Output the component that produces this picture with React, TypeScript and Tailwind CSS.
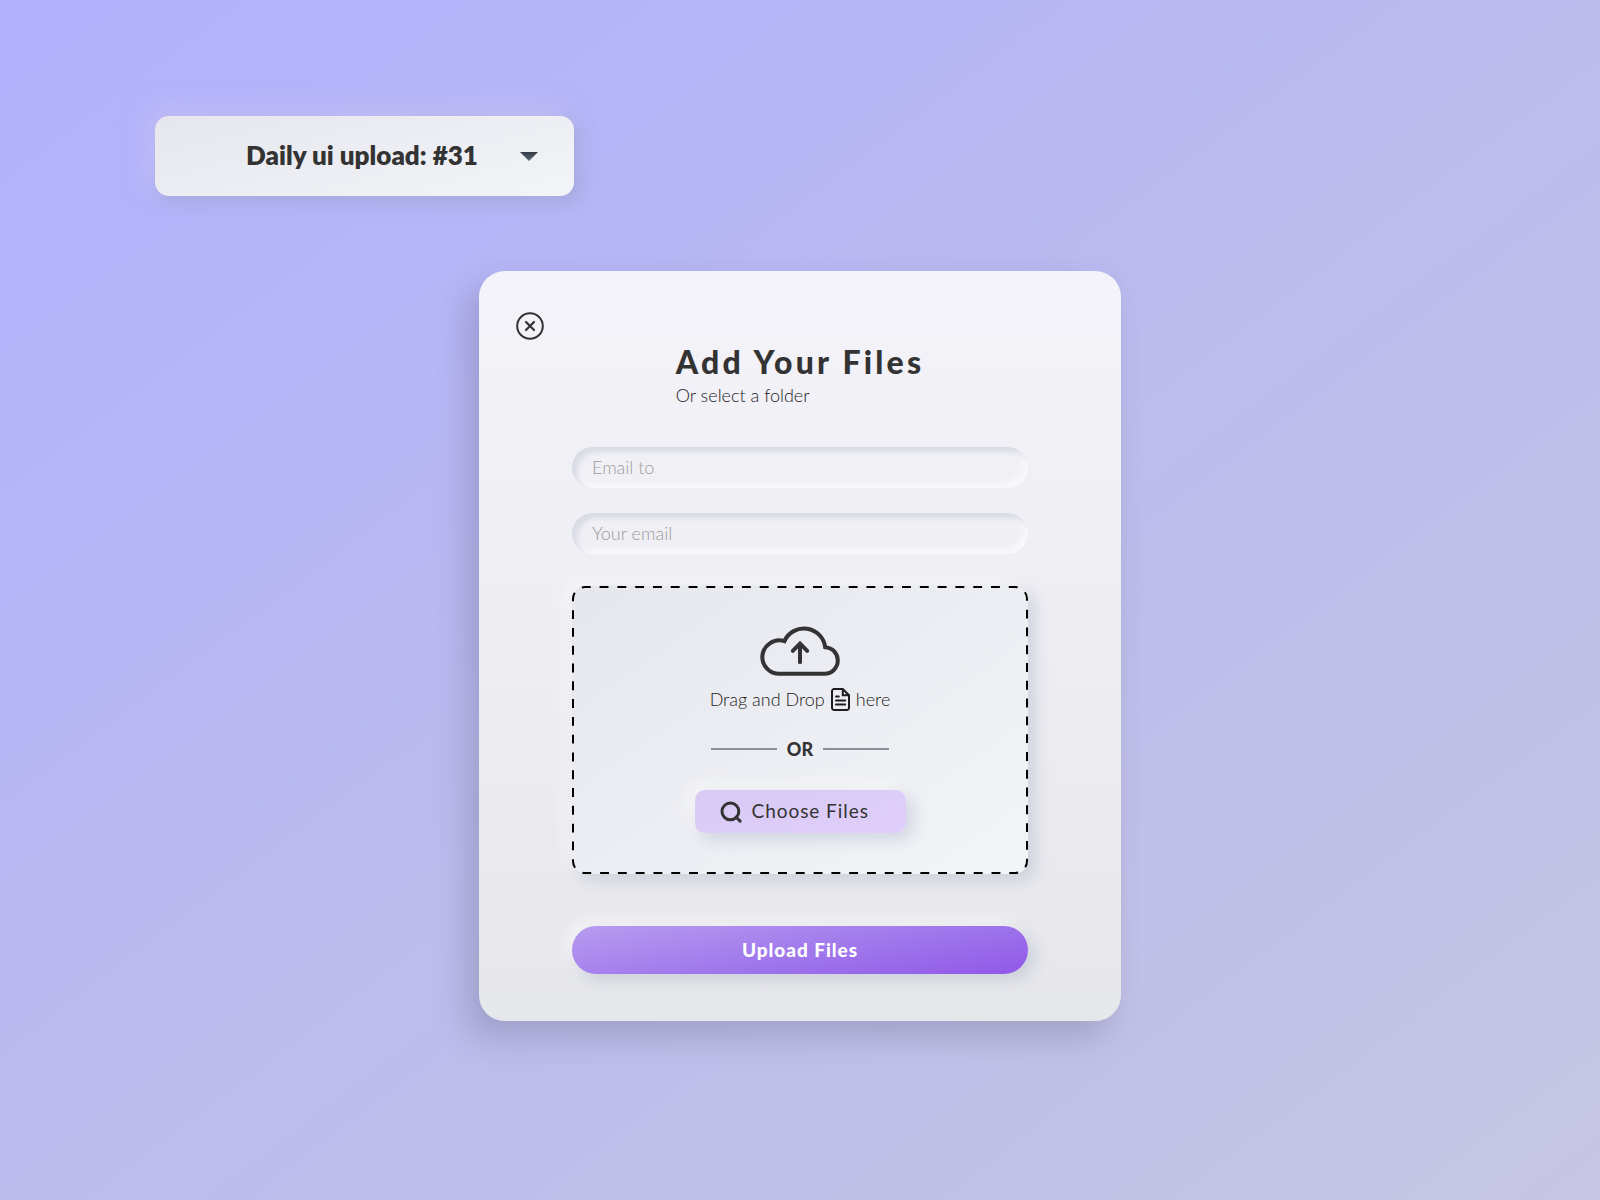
import { useState } from 'react';

function CloseIcon() {
  return (
    <svg width="30" height="30" viewBox="0 0 30 30" fill="none" stroke="currentColor" aria-hidden="true">
      <circle cx="15" cy="15" r="12.8" strokeWidth="2" />
      <path d="M11 11l8 8M19 11l-8 8" strokeWidth="2.2" strokeLinecap="round" />
    </svg>
  );
}

function CloudUploadIcon() {
  return (
    <svg width="80" height="50" viewBox="0 0 80 50" fill="none" stroke="currentColor" aria-hidden="true">
      <path
        d="M19.3 47.8A17 17 0 0 1 2.3 30.8A17 17 0 0 1 24.4 15.2A21.4 21.4 0 0 1 65.2 21.2A13.31 13.31 0 0 1 64.6 47.8Z"
        strokeWidth="4"
      />
      <path d="M40 36.3V18M32.8 24.8L40 17.6l7.2 7.2" strokeWidth="4" strokeLinecap="round" />
    </svg>
  );
}

function FileIcon() {
  return (
    <svg width="19" height="23" viewBox="0 0 19 23" fill="none" stroke="currentColor" aria-hidden="true">
      <path d="M3.2 1h8.6L18 7.2v12.6a2.2 2.2 0 0 1-2.2 2.2H3.2A2.2 2.2 0 0 1 1 19.8V3.2A2.2 2.2 0 0 1 3.2 1z" strokeWidth="2" />
      <path d="M11.8 1.5v5.7h5.7" strokeWidth="2" />
      <path d="M5 8.4h2.8M5 12.6h9.2M5 16.6h9.2" strokeWidth="2" strokeLinecap="round" />
    </svg>
  );
}

function SearchIcon() {
  return (
    <svg width="22" height="22" viewBox="0 0 22 22" fill="none" stroke="currentColor" strokeWidth="3" aria-hidden="true">
      <circle cx="10.4" cy="10.4" r="8.4" />
      <path d="M16.2 16.2l3.9 3.9" strokeLinecap="round" />
    </svg>
  );
}

const fields = [
  { id: 'email-to', placeholder: 'Email to' },
  { id: 'your-email', placeholder: 'Your email' },
];

const raised = 'shadow-[6px_6px_16px_rgba(166,176,195,0.45),-6px_-6px_16px_rgba(255,255,255,0.6)]';

export default function App() {
  const [values, setValues] = useState<Record<string, string>>({});

  return (
    <main className="min-h-screen pt-29 pb-20 font-['Lato',sans-serif] text-[#333333] bg-[linear-gradient(143deg,#b1b1fc_0%,#b6b5f7_25%,#bbbbee_50%,#c0c0e8_75%,#c6c6e3_100%)]">
      {/* Project picker */}
      <header className="px-[155px]">
        <div className="relative w-full max-w-[419px]">
          <select
            aria-label="Project"
            className="w-full h-20 pl-[91px] pr-16 pb-0.5 appearance-none rounded-[14px] text-[26px] font-extrabold bg-[linear-gradient(165deg,#e6e7ed,#f3f4f8)] shadow-[6px_6px_16px_rgba(150,160,200,0.55),-8px_-8px_24px_rgba(212,202,245,0.5)]"
          >
            <option>Daily ui upload: #31</option>
          </select>
          <svg className="absolute right-9 top-9 pointer-events-none" width="18" height="9" viewBox="0 0 18 9" aria-hidden="true">
            <defs>
              <linearGradient id="caret" x1="0" y1="0" x2="0" y2="1">
                <stop offset="0" stopColor="#333a45" />
                <stop offset="1" stopColor="#5b6878" />
              </linearGradient>
            </defs>
            <path d="M0 0h18L9 9z" fill="url(#caret)" />
          </svg>
        </div>
      </header>

      {/* Upload dialog */}
      <section className="w-full max-w-[642px] mx-auto mt-[75px] pt-10 pb-[47px] rounded-[26px] bg-[linear-gradient(180deg,#f4f3f9,#e6e7eb)] shadow-[-12px_16px_32px_rgba(60,60,80,0.22)]">
        <div className="px-9">
          <button type="button" aria-label="Close" className="block">
            <CloseIcon />
          </button>
        </div>

        <form className="px-[93px]" onSubmit={(e) => e.preventDefault()}>
          <div className="w-fit mx-auto mt-[3px]">
            <h1 className="text-[32px] leading-9 font-black tracking-widest">Add Your Files</h1>
            <p className="mt-[3px] text-lg leading-6 font-light text-[#1c1c1c]">Or select a folder</p>
          </div>

          <div className="mt-10 flex flex-col gap-[25px]">
            {fields.map((field) => (
              <input
                key={field.id}
                id={field.id}
                type="email"
                aria-label={field.placeholder}
                placeholder={field.placeholder}
                value={values[field.id] ?? ''}
                onChange={(e) => setValues({ ...values, [field.id]: e.target.value })}
                className="w-full h-[41px] px-5 pb-0.5 rounded-full text-lg font-light placeholder:text-[#9c9c9c] shadow-[inset_5px_5px_5px_#d9dce5,inset_-5px_-5px_5px_#f8f8fb] outline-none"
              />
            ))}
          </div>

          {/* Drop zone */}
          <div className={`relative mt-8 pt-10 pb-[41px] flex flex-col items-center rounded-[14px] bg-[linear-gradient(145deg,#e6e7ed,#f3f4f8)] ${raised}`}>
            <svg className="absolute inset-0 w-full h-full pointer-events-none" aria-hidden="true">
              <rect
                x="1"
                y="1"
                rx="12"
                className="w-[calc(100%-2px)] h-[calc(100%-2px)]"
                fill="none"
                stroke="#000000"
                strokeWidth="2"
                pathLength="164"
                strokeDasharray="1 1"
                strokeDashoffset="0.36"
              />
            </svg>
            <CloudUploadIcon />
            <p className="mt-[11px] flex items-center gap-1.5 text-lg leading-6 font-light text-[#1c1c1c]">
              Drag and Drop <FileIcon /> here
            </p>
            <div className="mt-[26px] flex items-center gap-2.5 text-lg leading-6 font-black">
              <span className="w-[66px] h-0.5 bg-[#8e8f94]" />
              OR
              <span className="w-[66px] h-0.5 bg-[#8e8f94]" />
            </div>
            <button
              type="button"
              className={`mt-[29px] w-[211px] h-[43px] pl-[25px] flex items-center gap-2.5 rounded-[10px] text-[19px] tracking-wider bg-[linear-gradient(165deg,#d8caf4,#dfcefa)] ${raised}`}
            >
              <SearchIcon />
              Choose Files
            </button>
          </div>

          <button
            type="submit"
            className={`mt-13 w-full h-12 rounded-full text-[19px] font-black tracking-wider text-white bg-[linear-gradient(170deg,#b79cf0,#a27aec_50%,#9058e8)] ${raised}`}
          >
            Upload Files
          </button>
        </form>
      </section>
    </main>
  );
}
